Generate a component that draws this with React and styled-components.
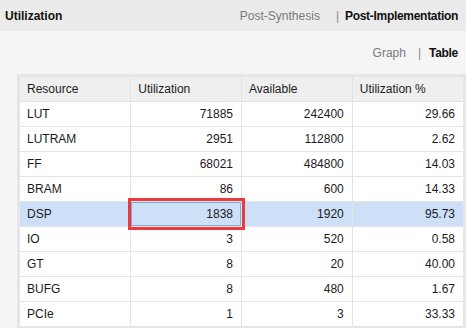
import React from 'react';
import styled, { createGlobalStyle } from 'styled-components';

const GlobalStyle = createGlobalStyle`
  html, body {
    margin: 0;
    padding: 0;
    background: #f5f5f5;
  }
  body {
    font-family: "Liberation Sans", Arial, sans-serif;
    font-size: 12px;
    color: #1b1b1b;
  }
`

const Panel = styled.div`
  width: 466px;
  height: 328px;
  overflow: hidden;
  background: #f5f5f5;
`

const TitleBar = styled.div`
  height: 31px;
  display: flex;
  align-items: center;
  justify-content: space-between;
  padding: 0 8px 0 5px;
  background: #ebebeb;
`

const Title = styled.div`
  font-weight: bold;
  color: #111;
`

const Switch = styled.div`
  display: flex;
  align-items: center;
`

const SwitchItem = styled.span`
  color: ${(props) => (props.active ? '#111' : '#7a7a7a')};
  font-weight: ${(props) => (props.active ? 'bold' : 'normal')};
  letter-spacing: ${(props) => (props.active ? '-0.3px' : '0')};
`

const Sep = styled.span`
  color: #888;
  margin: 0 ${(props) => props.right}px 0 ${(props) => props.left}px;
`

const ViewBar = styled.div`
  height: 43px;
  display: flex;
  align-items: center;
  justify-content: flex-end;
  padding-right: 8px;
`

const TableFrame = styled.div`
  margin-left: 17px;
  border: 3px solid #e6e6e6;
  background: #fff;
`

const Grid = styled.table`
  width: 443px;
  border-collapse: collapse;
  table-layout: fixed;
`

const HeadCell = styled.th`
  height: 24px;
  padding: 0 7px;
  text-align: left;
  font-weight: normal;
  color: #1b1b1b;
  background: #efefef;
  border-bottom: 1px solid #e4e4e4;
  border-left: 1px solid #e4e4e4;
  &:first-child { border-left: none; }
`

const Row = styled.tr`
  background: ${(props) => (props.selected ? '#cde0f8' : '#fff')};
  &:last-child td { border-bottom: none; }
`

const Cell = styled.td`
  height: 24px;
  padding: 0 8px 0 7px;
  text-align: ${(props) => (props.num ? 'right' : 'left')};
  border-bottom: 1px solid #e4e4e4;
  border-left: 1px solid #e4e4e4;
  white-space: nowrap;
  &:first-child { border-left: none; }
`

const FocusCell = styled(Cell)`
  position: relative;
  box-shadow: inset 0 0 0 1px #78aee2;
  &::after {
    content: '';
    position: absolute;
    left: -3px;
    top: -4px;
    width: 111px;
    height: 26px;
    border: 3px solid #ee3a3a;
  }
`

const rows = [
  ['LUT', '71885', '242400', '29.66'],
  ['LUTRAM', '2951', '112800', '2.62'],
  ['FF', '68021', '484800', '14.03'],
  ['BRAM', '86', '600', '14.33'],
  ['DSP', '1838', '1920', '95.73'],
  ['IO', '3', '520', '0.58'],
  ['GT', '8', '20', '40.00'],
  ['BUFG', '8', '480', '1.67'],
  ['PCIe', '1', '3', '33.33'],
];

export default function App() {
  return (
    <Panel>
      <GlobalStyle />
      <TitleBar>
        <Title>Utilization</Title>
        <Switch>
          <SwitchItem>Post-Synthesis</SwitchItem>
          <Sep left={16} right={6}>|</Sep>
          <SwitchItem active>Post-Implementation</SwitchItem>
        </Switch>
      </TitleBar>
      <ViewBar>
        <SwitchItem>Graph</SwitchItem>
        <Sep left={12} right={8}>|</Sep>
        <SwitchItem active>Table</SwitchItem>
      </ViewBar>
      <TableFrame>
        <Grid>
          <thead>
            <tr>
              <HeadCell>Resource</HeadCell>
              <HeadCell>Utilization</HeadCell>
              <HeadCell>Available</HeadCell>
              <HeadCell>Utilization %</HeadCell>
            </tr>
          </thead>
          <tbody>
            {rows.map(([name, used, avail, pct]) => {
              const sel = name === 'DSP';
              const UsedCell = sel ? FocusCell : Cell;
              return (
                <Row key={name} selected={sel}>
                  <Cell>{name}</Cell>
                  <UsedCell num>{used}</UsedCell>
                  <Cell num>{avail}</Cell>
                  <Cell num>{pct}</Cell>
                </Row>
              );
            })}
          </tbody>
        </Grid>
      </TableFrame>
    </Panel>
  );
}
